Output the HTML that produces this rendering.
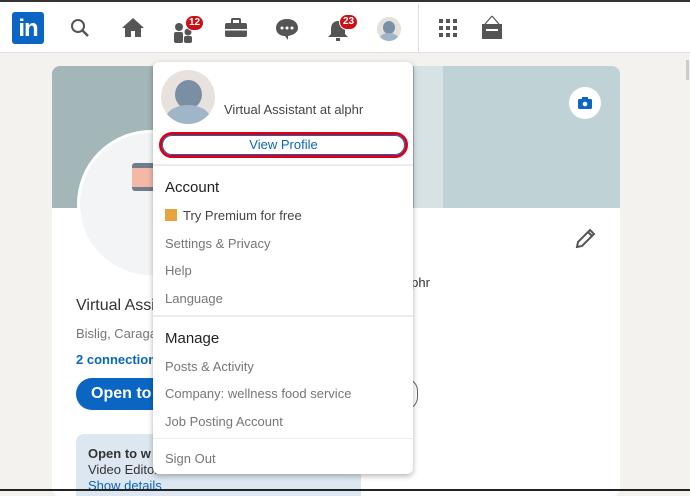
<!DOCTYPE html>
<html><head><style>
*{margin:0;padding:0;box-sizing:border-box}
body{width:690px;height:491px;overflow:hidden;background:#f3f2ef;font-family:"Liberation Sans",sans-serif;position:relative}
.a{position:absolute}
.nav{left:0;top:0;width:690px;height:53px;background:#fff;border-bottom:1px solid #e0e0e0}
.badge{background:#cc1016;color:#fff;font-size:10px;font-weight:bold;border-radius:8px;padding:1px 3px;border:1.5px solid #fff;line-height:12px}
.dd{left:153px;top:62px;width:260px;height:412px;background:#fff;border-radius:6px;box-shadow:0 2px 6px rgba(0,0,0,.3);font-size:13px;color:#777}
.dd .i{position:absolute;left:12px}
.sep{position:absolute;left:0;width:260px;height:2px;background:#ececec}
</style></head><body>
<div class="a nav"></div>
<div class="a" style="left:12px;top:12px;width:32px;height:32px;background:#0a66c2;border-radius:3px;color:#fff;font-weight:bold;font-size:24px;line-height:34px;text-align:center;letter-spacing:-1px">in</div>
<svg class="a" style="left:70px;top:18px" width="20" height="20"><circle cx="8" cy="8" r="6" fill="none" stroke="#555" stroke-width="2"/><path d="M12 12 L18 18" stroke="#555" stroke-width="2.5"/></svg>
<svg class="a" style="left:121px;top:16px" width="24" height="22"><path d="M12 2 L23 12 H20 V21 H14 V15 H10 V21 H4 V12 H1Z" fill="#555"/></svg>
<svg class="a" style="left:173px;top:22px" width="22" height="22"><circle cx="6" cy="5" r="4" fill="#555"/><rect x="1" y="10" width="9" height="11" rx="2" fill="#555"/><circle cx="15" cy="10" r="3.5" fill="#555"/><rect x="11" y="14" width="8" height="7" rx="2" fill="#555"/></svg>
<div class="a badge" style="left:185px;top:15px">12</div>
<svg class="a" style="left:224px;top:18px" width="24" height="20"><rect x="8" y="1" width="8" height="5" rx="1" fill="none" stroke="#555" stroke-width="2"/><rect x="1" y="5" width="22" height="14" rx="2" fill="#555"/><rect x="1" y="11" width="22" height="1.5" fill="#fff"/></svg>
<svg class="a" style="left:275px;top:18px" width="24" height="22"><path d="M12 1 C5 1 1 5 1 10 C1 15 5 18 10 18 L13 22 V18 C19 17 23 14 23 10 C23 5 19 1 12 1Z" fill="#555"/><circle cx="7" cy="10" r="1.5" fill="#fff"/><circle cx="12" cy="10" r="1.5" fill="#fff"/><circle cx="17" cy="10" r="1.5" fill="#fff"/></svg>
<svg class="a" style="left:327px;top:20px" width="22" height="22"><path d="M11 1 C6 1 4 5 4 9 V14 L1 17 H21 L18 14 V9 C18 5 16 1 11 1Z" fill="#555"/><rect x="9" y="18" width="4" height="3" fill="#555"/></svg>
<div class="a badge" style="left:339px;top:14px">23</div>
<div class="a" style="left:377px;top:17px;width:24px;height:24px;border-radius:50%;background:#e4e0dc;overflow:hidden"><div class="a" style="left:6px;top:4px;width:12px;height:13px;border-radius:50%;background:#7a90a6"></div><div class="a" style="left:2px;top:16px;width:20px;height:14px;border-radius:50%;background:#9fb4c8"></div></div>
<div class="a" style="left:418px;top:4px;width:1px;height:49px;background:#e0e0e0"></div>
<svg class="a" style="left:439px;top:19px" width="20" height="20"><g fill="#555"><rect x="0" y="0" width="4" height="4"/><rect x="7" y="0" width="4" height="4"/><rect x="14" y="0" width="4" height="4"/><rect x="0" y="7" width="4" height="4"/><rect x="7" y="7" width="4" height="4"/><rect x="14" y="7" width="4" height="4"/><rect x="0" y="14" width="4" height="4"/><rect x="7" y="14" width="4" height="4"/><rect x="14" y="14" width="4" height="4"/></g></svg>
<svg class="a" style="left:480px;top:15px" width="24" height="26"><path d="M12 1 L5 9 M12 1 L19 9" stroke="#555" stroke-width="1.2" fill="none"/><rect x="2" y="9" width="20" height="15" fill="#555"/><rect x="6" y="14" width="12" height="2" fill="#fff"/></svg>
<div class="a" style="left:686px;top:60px;width:3px;height:20px;background:#ccc"></div>

<div class="a" style="left:52px;top:66px;width:568px;height:430px;background:#fff;border-radius:8px;overflow:hidden">
<div class="a" style="left:0;top:0;width:568px;height:142px;background:#bfd3d6"></div>
<div class="a" style="left:0;top:0;width:362px;height:142px;background:#a3b6b8"></div>
<div class="a" style="left:362px;top:0;width:29px;height:142px;background:#d7e2e4"></div>
<div class="a" style="left:25px;top:64px;width:148px;height:148px;border-radius:50%;background:#f3f4f5;border:3px solid #fff"></div>
<div class="a" style="left:80px;top:97px;width:30px;height:28px;background:#f3b9a6;border-top:5px solid #6f7d8c;border-bottom:4px solid #6f7d8c;border-radius:3px"></div>
<div class="a" style="left:517px;top:21px;width:32px;height:32px;border-radius:50%;background:#fff"></div>
<svg class="a" style="left:526px;top:30px" width="14" height="13"><rect x="0" y="3" width="14" height="10" rx="1.5" fill="#0a66c2"/><rect x="4" y="1" width="6" height="3" fill="#0a66c2"/><circle cx="7" cy="8" r="2.3" fill="#fff"/></svg>
<svg class="a" style="left:522px;top:162px" width="22" height="22"><path d="M3 19 L4 14 L16 2 L20 6 L8 18Z M14 4 L18 8" stroke="#555" stroke-width="2" fill="none"/></svg>
<div class="a" style="left:24px;top:231px;font-size:16px;color:#333">Virtual Assistant</div>
<div class="a" style="left:349px;top:209px;font-size:13px;color:#333">alphr</div>
<div class="a" style="left:24px;top:260px;font-size:13px;color:#777">Bislig, Caraga</div>
<div class="a" style="left:24px;top:286px;font-size:13px;color:#0a66c2;font-weight:bold">2 connections</div>
<div class="a" style="left:24px;top:312px;width:120px;height:32px;border-radius:16px;background:#0a66c2;color:#fff;font-weight:bold;font-size:16px;line-height:32px;padding-left:15px">Open to</div>
<div class="a" style="left:340px;top:312px;width:26px;height:32px;border-radius:16px;border:1.5px solid #666"></div>
<div class="a" style="left:24px;top:368px;width:285px;height:70px;border-radius:8px;background:#dde7f1;padding:12px;font-size:13px;color:#333;line-height:16px"><b>Open to w</b><br>Video Editor roles<br><span style="color:#0a66c2">Show details</span></div>
</div>

<div class="a dd">
<div class="a" style="left:8px;top:8px;width:54px;height:54px;border-radius:50%;background:#e7e2dd;overflow:hidden"><div class="a" style="left:14px;top:10px;width:27px;height:29px;border-radius:50%;background:#7b8fa4"></div><div class="a" style="left:4px;top:35px;width:46px;height:30px;border-radius:50%;background:#9fb5c8"></div></div>
<div class="a" style="left:71px;top:40px;color:#444;font-size:13px">Virtual Assistant at alphr</div>
<div class="a" style="left:6px;top:70px;width:249px;height:26px;border:3px solid #e00016;border-radius:13px;"><div style="border:1.5px solid #0a66c2;border-radius:10px;height:20px;text-align:center;color:#0a66c2;font-size:13px;line-height:17px">View Profile</div></div>
<div class="sep" style="top:102px"></div>
<div class="i" style="top:117px;font-size:15px;color:#222">Account</div>
<div class="i" style="top:146px;color:#444"><span style="display:inline-block;width:12px;height:12px;background:#e7a33e;margin-right:6px;vertical-align:-1px"></span>Try Premium for free</div>
<div class="i" style="top:174px">Settings &amp; Privacy</div>
<div class="i" style="top:201px">Help</div>
<div class="i" style="top:229px">Language</div>
<div class="sep" style="top:253px"></div>
<div class="i" style="top:268px;font-size:15px;color:#222">Manage</div>
<div class="i" style="top:297px">Posts &amp; Activity</div>
<div class="i" style="top:324px">Company: wellness food service</div>
<div class="i" style="top:352px">Job Posting Account</div>
<div class="sep" style="top:376px;height:1px"></div>
<div class="i" style="top:389px">Sign Out</div>
</div>
<div class="a" style="left:0;top:0;width:690px;height:2px;background:#333"></div>
<div class="a" style="left:0;top:489px;width:690px;height:2px;background:#222"></div>
</body></html>
